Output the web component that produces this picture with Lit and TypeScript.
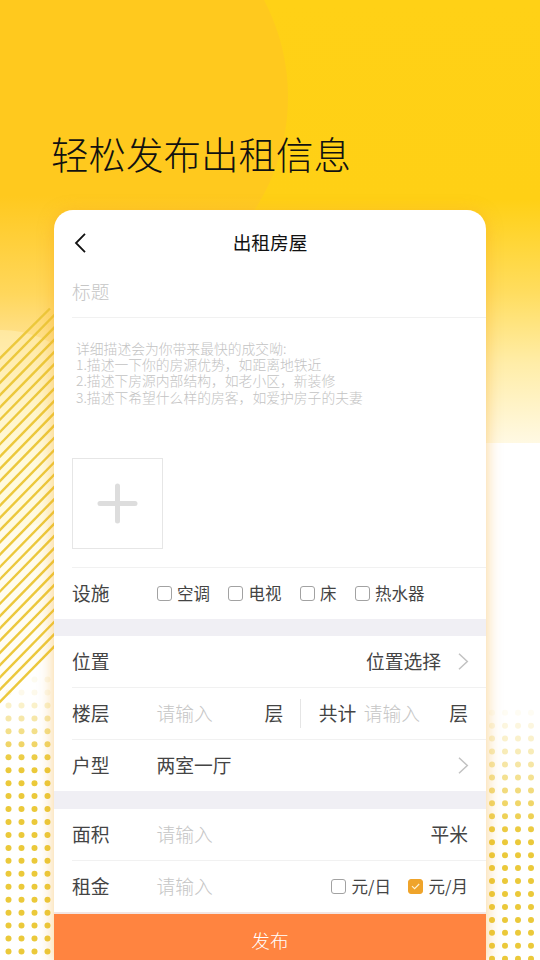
import { LitElement, html, svg, css } from "lit";
import { customElement, property, state } from "lit/decorators.js";
import { classMap } from "lit/directives/class-map.js";

const range = (n: number) => Array.from({ length: n }, (_, i) => i);

@customElement("check-option")
class CheckOption extends LitElement {
  @property() label = "";
  @property({ type: Boolean }) checked = false;

  static styles = css`
    :host { display: flex; align-items: center; gap: 5.5px; }
    .box {
      box-sizing: border-box; width: 15px; height: 15px; flex: none;
      border: 1px solid #a2a2a2; border-radius: 3px; background: #fff;
      display: flex; align-items: center; justify-content: center;
    }
    .box.on { background: #efa42b; border-color: #efa42b; }
    .text { font-size: 16.5px; line-height: 24px; margin-top: -1px; color: #444; white-space: nowrap; }
  `;

  render() {
    return html`
      <span class=${classMap({ box: true, on: this.checked })}>
        ${this.checked
          ? html`<svg width="9" height="7" viewBox="0 0 9 7" fill="none" stroke="#fff3d6" stroke-width="1.1"><path d="M1 3.2 3.6 5.7 8.2 1" /></svg>`
          : ""}
      </span>
      <span class="text">${this.label}</span>
    `;
  }
}

@customElement("page-backdrop")
class PageBackdrop extends LitElement {
  static styles = css`
    :host { display: block; }
    svg { display: block; }
  `;

  render() {
    const dots = (x0: number, y0: number, rows: number, solid: number) =>
      range(rows).map((r) =>
        range(4).map((c) => {
          const alpha = Math.min(1, (r + 0.6) / solid);
          return svg`<circle cx=${x0 + c * 13} cy=${y0 + r * 12.95} r="3" fill="#ebc93a" opacity=${alpha} />`;
        })
      );
    return html`
      <svg width="540" height="960" viewBox="0 0 540 960">
        <defs>
          <linearGradient id="sky" gradientUnits="userSpaceOnUse" x1="0" y1="0" x2="0" y2="443">
            <stop offset="0" stop-color="#ffd116" />
            <stop offset="0.45" stop-color="#ffd015" />
            <stop offset="0.66" stop-color="#ffdd5f" />
            <stop offset="0.82" stop-color="#ffeda8" />
            <stop offset="1" stop-color="#fff9e3" />
          </linearGradient>
          <linearGradient id="left" gradientUnits="userSpaceOnUse" x1="0" y1="0" x2="0" y2="700">
            <stop offset="0" stop-color="#ffc91e" />
            <stop offset="0.28" stop-color="#ffc91e" />
            <stop offset="0.42" stop-color="#ffd75c" />
            <stop offset="0.48" stop-color="#ffe08a" />
            <stop offset="0.58" stop-color="#fff1c4" />
            <stop offset="0.66" stop-color="#fffae4" />
            <stop offset="1" stop-color="#fffefa" />
          </linearGradient>
        </defs>
        <rect width="540" height="960" fill="#fff" />
        <rect width="540" height="443" fill="url(#sky)" />
        <circle cx="80" cy="97" r="208" fill="url(#left)" />
        <rect y="180" width="70" height="530" fill="url(#left)" />
        <circle cx="2" cy="430" r="100" fill="#fffad0" opacity="0.36" />
        <path d="M0 702 54 646V960H0Z" fill="#fff" />
        <g stroke="#ecc83c" stroke-width="2.4">
          ${range(29).map((i) => svg`<path d=${`M-2 ${360.3 + i * 12.27}L${i ? 60 : 50} ${i ? 297 + i * 12.27 : 308.5}`} />`)}
        </g>
        <g>${dots(8.5, 692.5, 21, 6)}</g>
        <circle cx="34.5" cy="679.6" r="3" fill="#ebc93a" opacity="0.08" />
        <circle cx="47.5" cy="679.6" r="3" fill="#ebc93a" opacity="0.1" />
        <g>${dots(492, 712.7, 20, 10)}</g>
      </svg>
    `;
  }
}

@customElement("app-root")
class AppRoot extends LitElement {
  @state() private facilities = ["空调", "电视", "床", "热水器"];
  @state() private unit = "元/月";

  static styles = css`
    :host {
      display: block; position: relative; width: 540px; height: 960px; overflow: hidden;
      font-family: "Noto Sans CJK SC", sans-serif; color: #444;
    }
    page-backdrop { position: absolute; inset: 0; z-index: 0; }
    .page { position: relative; z-index: 1; display: flex; flex-direction: column; height: 960px; }
    .headline {
      margin: 0; height: 210px; padding: 125px 0 0 51px; box-sizing: border-box; flex: none;
      font-size: 37.5px; line-height: 56px; font-weight: 300; color: #111; white-space: nowrap;
    }
    .card {
      width: 432px; margin: 0 54px; flex: 1; background: #fff; overflow: hidden;
      border-radius: 19px 19px 0 0; display: flex; flex-direction: column;
      box-shadow: 0 2px 15px rgba(245, 165, 30, 0.5);
    }
    .nav {
      height: 47px; padding: 9px 20px 0; flex: none;
      display: grid; grid-template-columns: 40px 1fr 40px; align-items: center;
    }
    .nav-title { text-align: center; font-size: 18.7px; line-height: 28px; margin-top: -2px; color: #111; }
    .line { margin-left: 18px; border-bottom: 1px solid #f1f1f1; box-sizing: border-box; flex: none; }
    .title-field { height: 52px; font-size: 18.7px; line-height: 50px; color: #c6c6c6; font-weight: 300; }
    .detail { height: 250px; padding-top: 22px; }
    .hint {
      margin: 0; padding-left: 4px; font-size: 13.8px; line-height: 16.2px; height: 118px;
      color: #c3c3c3; font-weight: 300; white-space: pre;
    }
    .upload {
      box-sizing: border-box; width: 91px; height: 91px; border: 1px solid #e6e6e6; margin-left: -0.5px;
      display: flex; align-items: center; justify-content: center;
    }
    .row {
      height: 52px; padding: 0 18px 2px 0; display: flex; align-items: center;
      font-size: 18.75px; line-height: 28px; white-space: nowrap;
    }
    .last { border-bottom: 0; height: 51px; padding-bottom: 0; }
    .last > span { margin-top: -2px; }
    .key { width: 84.5px; flex: none; }
    .grow { flex: 1; }
    .empty { color: #c6c6c6; font-weight: 300; }
    .options { display: flex; gap: 18px; }
    .units { display: flex; gap: 17px; }
    .band { height: 17px; flex: none; background: #f0eff4; }
    .band.wide { height: 18px; }
    .chev { margin-left: 17px; margin-right: -1px; margin-top: 1px; }
    .last > .chev { margin-top: 0; }
    .floor { width: 108px; }
    .sep { width: 1px; height: 29px; background: #e5e5e5; margin: 1px 17.5px 0 17px; }
    .total { width: 45px; }
    .submit {
      flex: 1; border-top: 2px solid #f3e5e2; background: #ff8440; color: #fff;
      font-size: 18.7px; line-height: 51px; text-align: center; font-weight: 300;
    }
  `;

  private chevron() {
    return html`<svg class="chev" width="11" height="17" viewBox="0 0 11 17" fill="none" stroke="#c2c2c2" stroke-width="1.5"><path d="M1 .8 9.3 8.5 1 16.2" /></svg>`;
  }

  render() {
    return html`
      <page-backdrop></page-backdrop>
      <div class="page">
        <h1 class="headline">轻松发布出租信息</h1>
        <main class="card">
          <header class="nav">
            <svg width="13" height="20" viewBox="0 0 13 20" fill="none" stroke="#111" stroke-width="1.8"><path d="M11 .9 2 10l9 9.1" /></svg>
            <span class="nav-title">出租房屋</span>
          </header>
          <div class="line title-field">标题</div>
          <section class="line detail">
            <p class="hint">详细描述会为你带来最快的成交呦:
1.描述一下你的房源优势，如距离地铁近
2.描述下房源内部结构，如老小区，新装修
3.描述下希望什么样的房客，如爱护房子的夫妻</p>
            <div class="upload">
              <svg width="41" height="41" viewBox="0 0 41 41" stroke="#ddd" stroke-width="5" stroke-linecap="round"><path d="M20.5 3v35M3 20.5h35" /></svg>
            </div>
          </section>
          <div class="line row last">
            <span class="key">设施</span>
            <div class="options">
              ${this.facilities.map((f) => html`<check-option label=${f}></check-option>`)}
            </div>
          </div>
          <div class="band"></div>
          <div class="line row">
            <span class="key">位置</span><span class="grow"></span><span>位置选择</span>${this.chevron()}
          </div>
          <div class="line row">
            <span class="key">楼层</span><span class="empty floor">请输入</span><span>层</span>
            <i class="sep"></i>
            <span class="total">共计</span><span class="empty grow">请输入</span><span>层</span>
          </div>
          <div class="line row last">
            <span class="key">户型</span><span class="grow">两室一厅</span>${this.chevron()}
          </div>
          <div class="band wide"></div>
          <div class="line row">
            <span class="key">面积</span><span class="empty grow">请输入</span><span>平米</span>
          </div>
          <div class="line row last">
            <span class="key">租金</span><span class="empty grow">请输入</span>
            <div class="units">
              ${["元/日", "元/月"].map((u) => html`<check-option label=${u} ?checked=${u === this.unit}></check-option>`)}
            </div>
          </div>
          <div class="submit">发布</div>
        </main>
      </div>
    `;
  }
}
